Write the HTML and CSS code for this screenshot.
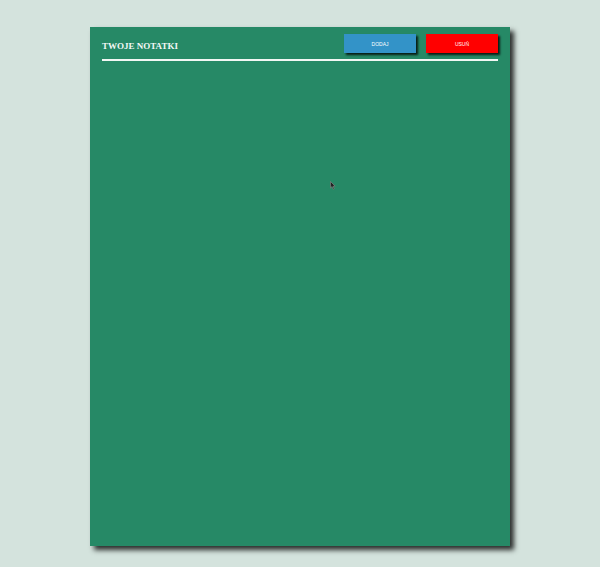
FILE: index.html
```html
<!DOCTYPE html>
<html lang="pl">
<head>
<meta charset="utf-8">
<title>Twoje notatki</title>
<link rel="stylesheet" href="styles.css">
</head>
<body>
<main class="board">
  <header class="board-head">
    <h1 class="title">TWOJE NOTATKI</h1>
    <div class="actions">
      <button class="btn btn-add">DODAJ</button>
      <button class="btn btn-del">USUŃ</button>
    </div>
  </header>
  <hr class="rule">
  <section class="notes"></section>
  <svg class="cursor" width="6" height="9" viewBox="0 0 6 9"><path d="M0.5 0.5 L0.5 7 L2 5.6 L3.2 8.3 L4.2 7.9 L3 5.2 L5.2 5.2 Z" fill="#222" stroke="#888" stroke-width="0.6"/></svg>
</main>
</body>
</html>
```
FILE: styles.css
```css
html, body {
  margin: 0;
  padding: 0;
}
body {
  background: #d4e3dd;
  width: 600px;
  height: 567px;
  overflow: hidden;
  padding-top: 27px;
  box-sizing: border-box;
}
.board {
  position: relative;
  margin-left: 90px;
  width: 420px;
  height: 519px;
  background: #268966;
  box-sizing: border-box;
  padding: 7px 12px 0 12px;
  box-shadow: 4px 4px 5px rgba(0, 0, 0, 0.8);
}
.board-head {
  display: flex;
  align-items: center;
  justify-content: space-between;
  height: 19px;
}
.title {
  margin: 5px 0 0 0;
  font-family: "Liberation Serif", "DejaVu Serif", serif;
  font-weight: bold;
  font-size: 9px;
  color: #f4f8f6;
  letter-spacing: 0;
}
.actions {
  display: flex;
  gap: 10px;
}
.btn {
  width: 72px;
  height: 19px;
  border: none;
  padding: 0;
  margin: 0;
  font-family: "Liberation Sans", Arial, sans-serif;
  font-size: 5px;
  color: #fff;
  box-shadow: 2px 2px 2px rgba(0, 0, 0, 0.8);
}
.btn-add {
  background: #3393c8;
}
.btn-del {
  background: #ff0000;
}
.rule {
  margin: 6px 0 0 0;
  border: none;
  height: 2px;
  background: #f2f7f4;
}
.cursor {
  position: absolute;
  left: 240px;
  top: 154px;
}
```
